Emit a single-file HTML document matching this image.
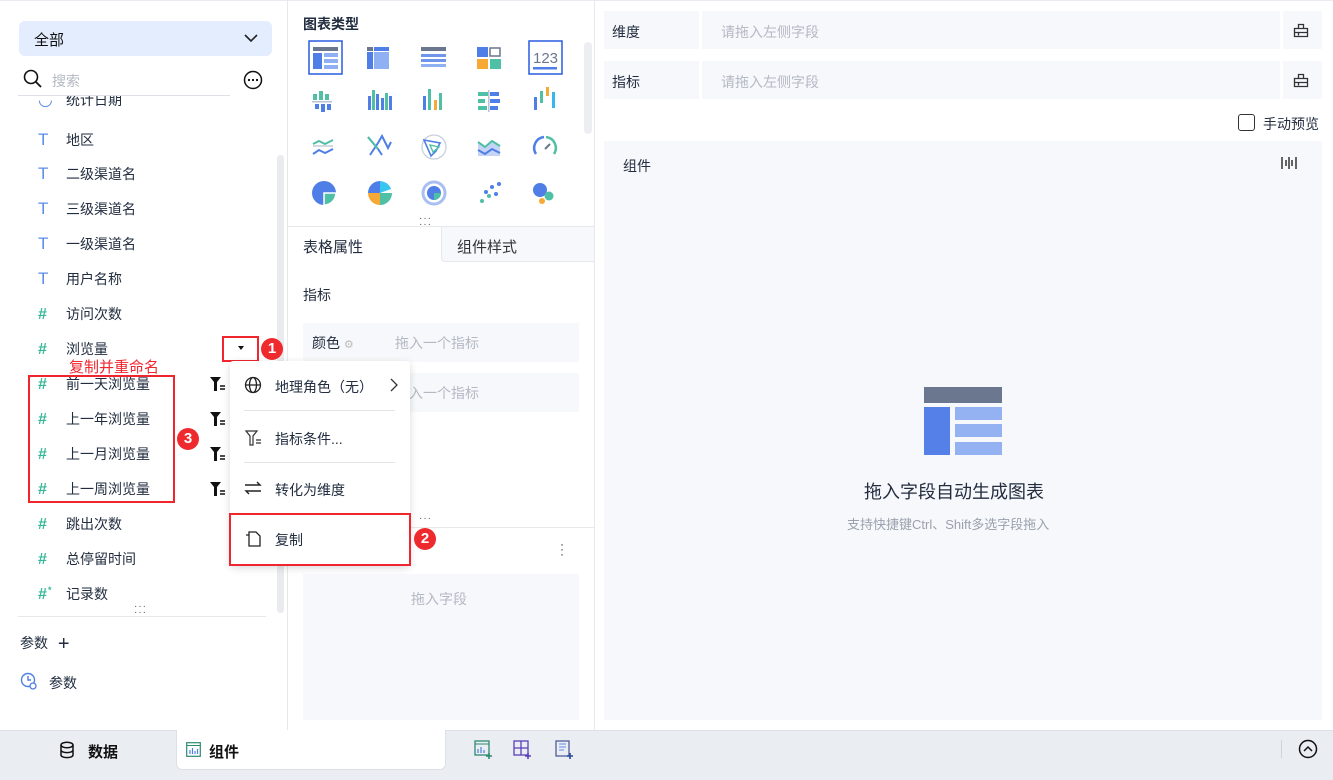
<!DOCTYPE html>
<html><head><meta charset="utf-8"><style>
*{margin:0;padding:0;box-sizing:border-box}
body{width:1333px;height:780px;overflow:hidden;background:#fff;font-family:"Liberation Sans","Noto Sans CJK SC",sans-serif;font-size:14px;color:#222d3f;position:relative}
.a{position:absolute}
.t{white-space:nowrap}
.ph{color:#b3b9c4}
.row{position:absolute;left:38px;height:20px;line-height:20px;white-space:nowrap}
.row i{display:inline-block;width:28px;font-style:normal;font-weight:bold;color:#37b79a;font-size:16px;position:relative}
.row i.T{color:#5c8de8;font-weight:normal;font-size:17px}
.gray{background:#f7f8fb}
.red{border:2px solid #f0262e}
.badge{position:absolute;width:22px;height:22px;border-radius:50%;background:#ef2a2f;color:#fff;font-weight:bold;font-size:15px;text-align:center;line-height:22px}
.fn{position:absolute;left:209px}
</style></head><body>
<div class="a" style="left:0;top:0;width:1333px;height:1px;background:#e8ebf0"></div>
<!-- LEFT PANEL -->
<div class="a" style="left:19px;top:21px;width:253px;height:35px;background:#e3edfd;border-radius:6px"></div>
<div class="a t" style="left:34px;top:29px;font-size:15px;color:#111">全部</div>
<svg class="a" style="left:243px;top:31px" width="16" height="14"><path d="M2 4l6 6 6-6" fill="none" stroke="#222" stroke-width="1.6"/></svg>
<svg class="a" style="left:23px;top:69px" width="20" height="20"><circle cx="8" cy="8" r="6.5" fill="none" stroke="#111" stroke-width="1.6"/><path d="M13 13l5 5" stroke="#111" stroke-width="1.8"/></svg>
<div class="a t ph" style="left:52px;top:71px">搜索</div>
<div class="a" style="left:18px;top:95px;width:212px;height:1px;background:#dde0e6"></div>
<svg class="a" style="left:243px;top:70px" width="20" height="20"><circle cx="10" cy="10" r="8.5" fill="none" stroke="#111" stroke-width="1.5"/><circle cx="6" cy="10" r="1.1"/><circle cx="10" cy="10" r="1.1"/><circle cx="14" cy="10" r="1.1"/></svg>
<div class="a" style="left:18px;top:96px;width:260px;height:16px;overflow:hidden"><div class="row" style="left:20px;top:-6px"><i class="T">◡</i>统计日期</div></div>
<div class="row" style="top:130px"><i class="T">T</i>地区</div>
<div class="row" style="top:164px"><i class="T">T</i>二级渠道名</div>
<div class="row" style="top:199px"><i class="T">T</i>三级渠道名</div>
<div class="row" style="top:234px"><i class="T">T</i>一级渠道名</div>
<div class="row" style="top:269px"><i class="T">T</i>用户名称</div>
<div class="row" style="top:304px"><i>#</i>访问次数</div>
<div class="row" style="top:339px"><i>#</i>浏览量</div>
<div class="row" style="top:374px"><i>#</i>前一天浏览量</div>
<div class="row" style="top:409px"><i>#</i>上一年浏览量</div>
<div class="row" style="top:444px"><i>#</i>上一月浏览量</div>
<div class="row" style="top:479px"><i>#</i>上一周浏览量</div>
<div class="row" style="top:514px"><i>#</i>跳出次数</div>
<div class="row" style="top:549px"><i>#</i>总停留时间</div>
<div class="row" style="top:584px"><i>#<span style="position:absolute;left:10px;top:-5px;font-size:9px">*</span></i>记录数</div>
<svg class="fn" style="top:376px" width="18" height="16"><path d="M1 1h11l-4 5v9h-3V6z" fill="#111"/><path d="M11 10h5M11 13h5" stroke="#111" stroke-width="1.4"/></svg>
<svg class="fn" style="top:411px" width="18" height="16"><path d="M1 1h11l-4 5v9h-3V6z" fill="#111"/><path d="M11 10h5M11 13h5" stroke="#111" stroke-width="1.4"/></svg>
<svg class="fn" style="top:446px" width="18" height="16"><path d="M1 1h11l-4 5v9h-3V6z" fill="#111"/><path d="M11 10h5M11 13h5" stroke="#111" stroke-width="1.4"/></svg>
<svg class="fn" style="top:481px" width="18" height="16"><path d="M1 1h11l-4 5v9h-3V6z" fill="#111"/><path d="M11 10h5M11 13h5" stroke="#111" stroke-width="1.4"/></svg>
<div class="a" style="left:277px;top:155px;width:7px;height:458px;background:#e9ebef;border-radius:4px"></div>
<div class="a t" style="left:134px;top:604px;font-size:10px;letter-spacing:1px;color:#555;line-height:6px">···<br>···</div>
<div class="a" style="left:18px;top:616px;width:248px;height:1px;background:#e6e8ec"></div>
<div class="a t" style="left:20px;top:633px">参数 <span style="font-size:20px;margin-left:6px;vertical-align:-2px">+</span></div>
<svg class="a" style="left:20px;top:672px" width="20" height="20"><circle cx="8" cy="8" r="6.5" fill="none" stroke="#4f7fe0" stroke-width="1.4"/><path d="M8 4v4h3" fill="none" stroke="#4f7fe0" stroke-width="1.4"/><circle cx="13" cy="14" r="3" fill="#fff" stroke="#4f7fe0" stroke-width="1.3"/></svg>
<div class="a t" style="left:49px;top:673px">参数</div>
<div class="a" style="left:287px;top:0;width:1px;height:730px;background:#e6e8ec"></div>
<div class="a red" style="left:222px;top:336px;width:37px;height:26px"></div>
<div class="a" style="left:238px;top:346px;width:0;height:0;border-left:3px solid transparent;border-right:3px solid transparent;border-top:4px solid #111"></div>
<div class="badge" style="left:261px;top:338px">1</div>
<div class="a t" style="left:69px;top:356px;color:#f0262e;font-size:15px">复制并重命名</div>
<div class="a red" style="left:28px;top:375px;width:147px;height:128px"></div>
<div class="badge" style="left:177px;top:428px">3</div>
<!-- MIDDLE PANEL -->
<div class="a t" style="left:303px;top:14px;font-size:14px;font-weight:bold;color:#222d3f">图表类型</div>
<svg class="a" style="left:300px;top:38px" width="270" height="175">
<rect x="9" y="3" width="33" height="33" fill="none" stroke="#2a5ce0" stroke-width="1.5"/>
<rect x="13" y="9" width="25" height="4" fill="#6a778f"/><rect x="13" y="15" width="9" height="16" fill="#4f7fe6"/><rect x="24" y="15" width="14" height="4" fill="#8fb0f2"/><rect x="24" y="21" width="14" height="4" fill="#8fb0f2"/><rect x="24" y="27" width="14" height="4" fill="#8fb0f2"/>
<rect x="67" y="9" width="6" height="4" fill="#6a778f"/><rect x="74" y="9" width="15" height="4" fill="#4f7fe6"/><rect x="67" y="14" width="6" height="17" fill="#4f7fe6"/><rect x="74" y="14" width="15" height="17" fill="#8fb0f2"/>
<rect x="121" y="9" width="25" height="4" fill="#6a778f"/><rect x="121" y="16" width="25" height="3" fill="#6f96ea"/><rect x="121" y="21" width="25" height="3" fill="#6f96ea"/><rect x="121" y="26" width="25" height="3" fill="#8fb0f2"/>
<rect x="177" y="9" width="11" height="10" fill="#4f7fe6"/><rect x="190" y="10" width="10" height="8" fill="none" stroke="#6a778f" stroke-width="1.5"/><rect x="177" y="21" width="11" height="10" fill="#f6a934"/><rect x="190" y="21" width="11" height="10" fill="#4fbfa6"/>
<rect x="229" y="3" width="33" height="33" fill="none" stroke="#2a5ce0" stroke-width="1.5"/>
<text x="245.5" y="25" text-anchor="middle" font-size="15" fill="#6a778f" font-family="Liberation Sans">123</text><rect x="233" y="29" width="24" height="2.5" fill="#4f7fe6"/>
<g transform="translate(0,46)"><rect x="13" y="10" width="4" height="6" fill="#4fbfa6"/><rect x="19" y="7" width="4" height="9" fill="#4fbfa6"/><rect x="25" y="10" width="4" height="6" fill="#4fbfa6"/><rect x="12" y="17" width="20" height="1.5" fill="#b8c3d6"/><rect x="15" y="20" width="4" height="5" fill="#4f7fe6"/><rect x="21" y="20" width="4" height="8" fill="#4f7fe6"/><rect x="27" y="20" width="4" height="6" fill="#4f7fe6"/>
<rect x="68" y="12" width="3" height="14" fill="#4f7fe6"/><rect x="72" y="6" width="3" height="20" fill="#4fbfa6"/><rect x="76" y="10" width="3" height="16" fill="#4f7fe6"/><rect x="81" y="14" width="3" height="12" fill="#4f7fe6"/><rect x="85" y="9" width="3" height="17" fill="#4fbfa6"/><rect x="89" y="12" width="3" height="14" fill="#4f7fe6"/>
<rect x="123" y="12" width="3" height="14" fill="#4f7fe6"/><rect x="128" y="5" width="3" height="21" fill="#4fbfa6"/><rect x="134" y="16" width="3" height="10" fill="#f6a934"/><rect x="139" y="9" width="3" height="17" fill="#4fbfa6"/>
<rect x="178" y="8" width="10" height="4" fill="#4fbfa6"/><rect x="190" y="8" width="9" height="4" fill="#4f7fe6"/><rect x="178" y="15" width="7" height="4" fill="#4fbfa6"/><rect x="190" y="15" width="10" height="4" fill="#4f7fe6"/><rect x="178" y="22" width="9" height="4" fill="#4fbfa6"/><rect x="190" y="22" width="8" height="4" fill="#4f7fe6"/><rect x="188" y="6" width="1.5" height="22" fill="#b8c3d6"/>
<rect x="234" y="13" width="3" height="13" fill="#4f7fe6"/><rect x="240" y="7" width="3" height="12" fill="#4fbfa6"/><rect x="246" y="3" width="3" height="9" fill="#f6a934"/><rect x="252" y="8" width="3" height="16" fill="#38b6f0"/></g>
<g transform="translate(0,92)" fill="none" stroke-width="2"><path d="M13 14l6-3 6 3 8-4" stroke="#4fbfa6"/><path d="M13 16h20" stroke="#b8c3d6" stroke-width="1.3"/><path d="M13 24l6-4 6 3 8-4" stroke="#4f7fe6"/>
<path d="M68 7l10 12 4 6M70 25l8-12 4-7 6 12 3-6" stroke="#4f7fe6"/><path d="M68 7l10 12" stroke="#4fbfa6"/>
<circle cx="134" cy="17" r="12" stroke="#c8d0de" stroke-width="1.3"/><path d="M124 10l16 3-4 8-5 5z" stroke="#4f7fe6" stroke-width="1.6"/><path d="M130 15l9 2-6 5z" stroke="#4fbfa6" stroke-width="1.4"/>
<path d="M178 12l7 5 7-6 8 5v10h-22z" fill="#c5d4f5" stroke="none"/><path d="M178 12l7 5 7-6 8 5" stroke="#4fbfa6"/><path d="M178 20l7 4 7-5 8 4" stroke="#4f7fe6"/>
<path d="M236 24a11 11 0 0 1 8-17" stroke="#4f7fe6" stroke-width="2.5"/><path d="M246 7a11 11 0 0 1 8 17" stroke="#4fbfa6" stroke-width="2.5"/><path d="M245 19l5-5" stroke="#6a778f"/></g>
<g transform="translate(0,137)"><circle cx="24" cy="18" r="12" fill="#4f7fe6"/><path d="M24 18h12a12 12 0 0 1-12 12z" fill="#4fbfa6" stroke="#fff" stroke-width="1.5"/>
<path d="M80 18V6a12 12 0 0 0-12 12z" fill="#4f7fe6"/><path d="M80 18V6a12 12 0 0 1 11 8z" fill="#38c5f0"/><path d="M80 18h12a12 12 0 0 1-12 12z" fill="#4fbfa6"/><path d="M80 18v12a12 12 0 0 1-12-12z" fill="#f6a934"/>
<circle cx="134" cy="18" r="11" fill="none" stroke="#a9bff2" stroke-width="3"/><circle cx="134" cy="18" r="7" fill="#4f7fe6"/><path d="M134 18h7a7 7 0 0 1-7 7z" fill="#4fbfa6"/>
<g fill="#4f7fe6"><circle cx="199" cy="9" r="2"/><circle cx="192" cy="12" r="2"/><circle cx="186" cy="17" r="2"/><circle cx="196" cy="19" r="2"/></g><g fill="#4fbfa6"><circle cx="189" cy="21" r="2"/><circle cx="182" cy="26" r="2"/></g>
<circle cx="240" cy="15" r="7" fill="#4f7fe6"/><circle cx="249" cy="21" r="4.5" fill="#4fbfa6"/><circle cx="242" cy="26" r="3" fill="#f6a934"/></g>
</svg>
<div class="a" style="left:584px;top:42px;width:8px;height:92px;background:#eceef2;border-radius:4px"></div>
<div class="a t" style="left:419px;top:216px;font-size:10px;letter-spacing:1px;color:#555;line-height:6px">···<br>···</div>
<div class="a" style="left:288px;top:226px;width:306px;height:1px;background:#e6e8ec"></div>
<div class="a" style="left:441px;top:227px;width:153px;height:35px;background:#f7f8fb;border-left:1px solid #e6e8ec;border-bottom:1px solid #e6e8ec;border-bottom-left-radius:4px"></div>
<div class="a t" style="left:303px;top:236px;font-size:15px">表格属性</div>
<div class="a t" style="left:457px;top:236px;font-size:15px;color:#333">组件样式</div>
<div class="a t" style="left:303px;top:285px">指标</div>
<div class="a gray" style="left:303px;top:323px;width:276px;height:39px"></div>
<div class="a t" style="left:312px;top:333px">颜色 <span style="font-size:11px;color:#bbb">⚙</span></div>
<div class="a t ph" style="left:395px;top:333px">拖入一个指标</div>
<div class="a gray" style="left:303px;top:373px;width:276px;height:39px"></div>
<div class="a t ph" style="left:395px;top:383px">拖入一个指标</div>
<div class="a t" style="left:419px;top:516px;font-size:10px;letter-spacing:1px;color:#555;line-height:6px">···</div>
<div class="a" style="left:288px;top:527px;width:306px;height:1px;background:#e6e8ec"></div>
<div class="a t" style="left:560px;top:542px;font-size:12px;line-height:5px;color:#333">·<br>·<br>·</div>
<div class="a gray" style="left:303px;top:574px;width:276px;height:146px"></div>
<div class="a t ph" style="left:411px;top:589px">拖入字段</div>
<div class="a" style="left:594px;top:0;width:1px;height:730px;background:#e6e8ec"></div>
<!-- menu -->
<div class="a" style="left:230px;top:361px;width:180px;height:205px;background:#fff;box-shadow:0 2px 8px rgba(0,0,0,.15);border-radius:3px"></div>
<svg class="a" style="left:244px;top:376px" width="18" height="18"><circle cx="9" cy="9" r="7.5" fill="none" stroke="#222" stroke-width="1.3"/><ellipse cx="9" cy="9" rx="3.5" ry="7.5" fill="none" stroke="#222" stroke-width="1.3"/><path d="M1.5 9h15" stroke="#222" stroke-width="1.3"/></svg>
<div class="a t" style="left:275px;top:377px">地理角色（无）</div>
<svg class="a" style="left:389px;top:378px" width="10" height="14"><path d="M2 1l6 6-6 6" fill="none" stroke="#333" stroke-width="1.3"/></svg>
<div class="a" style="left:244px;top:410px;width:151px;height:1px;background:#e2e4e8"></div>
<svg class="a" style="left:245px;top:430px" width="18" height="16"><path d="M1 1h11l-4 5v9h-3V6z" fill="none" stroke="#333" stroke-width="1.2"/><path d="M11 10h5M11 13h5" stroke="#333" stroke-width="1.3"/></svg>
<div class="a t" style="left:275px;top:429px">指标条件...</div>
<div class="a" style="left:244px;top:462px;width:151px;height:1px;background:#e2e4e8"></div>
<svg class="a" style="left:244px;top:480px" width="18" height="16"><path d="M1 5h15l-3-3M17 11H2l3 3" fill="none" stroke="#222" stroke-width="1.4"/></svg>
<div class="a t" style="left:275px;top:480px">转化为维度</div>
<svg class="a" style="left:245px;top:531px" width="16" height="16"><path d="M4 4V1h7l4 4v10H4z M1 4h3v11" fill="none" stroke="#222" stroke-width="1.3"/></svg>
<div class="a t" style="left:275px;top:530px">复制</div>
<div class="a red" style="left:229px;top:513px;width:182px;height:53px"></div>
<div class="badge" style="left:414px;top:528px">2</div>
<!-- RIGHT PANEL -->
<div class="a gray" style="left:604px;top:11px;width:95px;height:38px"></div>
<div class="a gray" style="left:702px;top:11px;width:578px;height:38px"></div>
<div class="a gray" style="left:1283px;top:11px;width:39px;height:38px"></div>
<div class="a t" style="left:612px;top:22px">维度</div>
<div class="a t ph" style="left:721px;top:22px">请拖入左侧字段</div>
<div class="a gray" style="left:604px;top:61px;width:95px;height:38px"></div>
<div class="a gray" style="left:702px;top:61px;width:578px;height:38px"></div>
<div class="a gray" style="left:1283px;top:61px;width:39px;height:38px"></div>
<div class="a t" style="left:612px;top:72px">指标</div>
<div class="a t ph" style="left:721px;top:72px">请拖入左侧字段</div>
<svg class="a" style="left:1293px;top:22px" width="16" height="16"><path d="M1.5 6.5h13v8h-13z M5.5 6.5v-4h5v4 M1.5 10.5h13 M5.5 10.5v3" fill="none" stroke="#333" stroke-width="1.3"/></svg>
<svg class="a" style="left:1293px;top:72px" width="16" height="16"><path d="M1.5 6.5h13v8h-13z M5.5 6.5v-4h5v4 M1.5 10.5h13 M5.5 10.5v3" fill="none" stroke="#333" stroke-width="1.3"/></svg>
<div class="a" style="left:1238px;top:114px;width:17px;height:17px;border:1.5px solid #333;border-radius:3px"></div>
<div class="a t" style="left:1263px;top:114px">手动预览</div>
<div class="a gray" style="left:604px;top:141px;width:718px;height:579px"></div>
<div class="a t" style="left:623px;top:156px">组件</div>
<svg class="a" style="left:1280px;top:155px" width="18" height="16"><path d="M2 2v12M6 5v6M9 2v12M12 5v6M16 2v12" stroke="#333" stroke-width="1.5"/></svg>
<div class="a" style="left:924px;top:387px;width:78px;height:16px;background:#6a778f"></div>
<div class="a" style="left:924px;top:407px;width:26px;height:48px;background:#5480e8"></div>
<div class="a" style="left:955px;top:407px;width:47px;height:13px;background:#94b2f2"></div>
<div class="a" style="left:955px;top:424px;width:47px;height:13px;background:#94b2f2"></div>
<div class="a" style="left:955px;top:442px;width:47px;height:13px;background:#94b2f2"></div>
<div class="a t" style="left:864px;top:478px;font-size:18px;color:#222d3f">拖入字段自动生成图表</div>
<div class="a t" style="left:847px;top:514px;font-size:13px;color:#9aa1ad">支持快捷键Ctrl、Shift多选字段拖入</div>
<!-- BOTTOM BAR -->
<div class="a" style="left:0;top:730px;width:1333px;height:50px;background:#eaedf2;border-top:1px solid #dde0e6"></div>
<div class="a" style="left:176px;top:730px;width:270px;height:40px;background:#fff;border-radius:0 0 6px 6px;border:1px solid #dde0e6;border-top:none"></div>
<svg class="a" style="left:59px;top:741px" width="16" height="18"><ellipse cx="8" cy="4" rx="6" ry="2.8" fill="none" stroke="#111" stroke-width="1.5"/><path d="M2 4v10c0 3.5 12 3.5 12 0V4M2 9c0 3.5 12 3.5 12 0" fill="none" stroke="#111" stroke-width="1.5"/></svg>
<div class="a t" style="left:88px;top:741px;font-size:15px;font-weight:bold;color:#111">数据</div>
<svg class="a" style="left:186px;top:742px" width="15" height="15"><rect x="0.7" y="0.7" width="13.6" height="13.6" fill="none" stroke="#2e8a72" stroke-width="1.2"/><path d="M1 3.5h13" stroke="#2e8a72"/><path d="M4 12V8M6.5 12V6M9 12V9M11.5 12V7" stroke="#4f7fe6" stroke-width="1.2"/></svg>
<div class="a t" style="left:209px;top:741px;font-size:15px;font-weight:bold;color:#111">组件</div>
<svg class="a" style="left:474px;top:740px" width="20" height="20"><rect x="1" y="1" width="14" height="14" fill="none" stroke="#2e8a72" stroke-width="1.3"/><path d="M1 4h14" stroke="#2e8a72"/><path d="M4 13V9M7 13V7M10 13V10" stroke="#4f7fe6" stroke-width="1.2"/><path d="M15 13v6M12 16h6" stroke="#2e8a72" stroke-width="1.6"/></svg>
<svg class="a" style="left:513px;top:740px" width="20" height="20"><rect x="1" y="1" width="14" height="14" fill="none" stroke="#5a3fb8" stroke-width="1.3"/><path d="M8 1v14M1 8h14" stroke="#5a3fb8" stroke-width="1.3"/><path d="M15 13v6M12 16h6" stroke="#5a3fb8" stroke-width="1.6"/></svg>
<svg class="a" style="left:555px;top:740px" width="20" height="20"><rect x="1" y="1" width="13" height="15" fill="none" stroke="#4f5d9a" stroke-width="1.3"/><path d="M4 4h7M4 7h7M4 10h5" stroke="#7fa0e8" stroke-width="1.2"/><path d="M15 13v6M12 16h6" stroke="#2a4a9a" stroke-width="1.6"/></svg>
<div class="a" style="left:1281px;top:740px;width:1px;height:18px;background:#cfd3da"></div>
<svg class="a" style="left:1298px;top:739px" width="20" height="20"><circle cx="10" cy="10" r="8.5" fill="none" stroke="#111" stroke-width="1.5"/><path d="M6 12l4-4 4 4" fill="none" stroke="#111" stroke-width="1.5"/></svg>
</body></html>
